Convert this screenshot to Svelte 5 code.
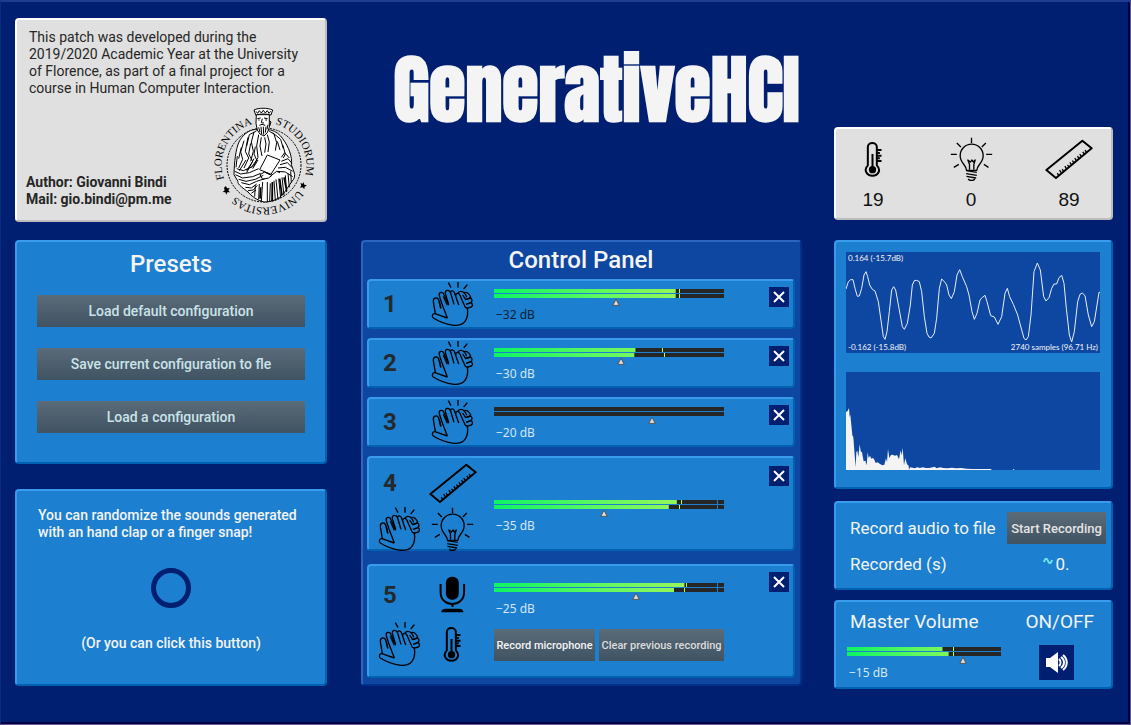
<script>
  const presets = ['Load default configuration', 'Save current configuration to fle', 'Load a configuration'];

  let channels = $state([
    { id: 1, db: -32, dark: true, gain: 53, bars: [[79, 80.5], [79, 80.5]], icons: ['clap'] },
    { id: 2, db: -30, gain: 55.4, bars: [[61.5, 73], [61, 73.7]], icons: ['clap'] },
    { id: 3, db: -20, gain: 69.5, bars: [[0, 0], [0, 0]], icons: ['clap'] },
    { id: 4, db: -35, gain: 47.8, tick: true, bars: [[79.5, 81.3], [76, 80.3]], icons: ['ruler', 'clap', 'bulb'] },
    { id: 5, db: -25, gain: 62, tick: true, bars: [[82.8, 83.4], [78.3, 82.5]], icons: ['mic', 'clap', 'thermo'] }
  ]);
  let master = $state({ id: 'master', db: -15, gain: 76.5, bars: [[62, 68.8], [66, 68.8]] });

  const sensors = [
    { icon: 'thermo', value: 19, label: 'Temperature' },
    { icon: 'bulb', value: 0, label: 'Light' },
    { icon: 'ruler', value: 89, label: 'Distance' }
  ];

  const wave =
    '0,111 7,89 14,83 21,83 27,109 34,133 40,132 47,109 54,69 60,59 65,74 71,99 79,112 87,117 97,149 107,219 112,254 117,262 123,239 130,179 137,114 143,104 149,114 159,169 169,224 175,232 184,214 193,159 199,99 205,86 212,85 220,89 227,119 235,194 243,244 249,255 255,258 265,244 272,199 280,109 287,81 297,91 302,99 309,129 316,140 325,119 333,69 341,53 349,74 362,104 369,129 378,179 385,202 393,184 402,144 409,136 417,130 423,149 434,191 445,195 456,217 467,194 477,124 484,109 491,134 502,157 515,189 523,219 534,259 540,264 547,254 555,189 564,59 574,33 583,54 593,134 600,147 609,137 617,109 624,96 632,96 639,77 647,70 654,94 661,169 670,249 677,270 685,239 695,149 702,127 709,123 717,131 727,189 737,224 745,209 753,159 759,121 762,121';
  const spectrum =
    '0,294 0,120 5,117 9,108 11,135 13,128 16,160 19,190 22,196 25,236 29,286 31,240 34,236 37,255 41,217 44,238 48,241 53,268 58,266 62,280 65,241 68,258 72,251 76,260 80,258 84,261 89,273 95,271 102,276 109,280 115,278 120,259 123,270 126,231 130,258 135,249 140,248 147,251 153,249 159,262 164,235 167,250 170,227 174,280 178,259 183,277 188,281 189,294 192,286 200,287 206,289 214,286 222,288 230,286 240,288 250,288 266,284 272,289 282,286 292,288 304,289 318,287 330,289 345,288 362,290 380,291 436,291 436,294 500,294 502,291 506,294';
</script>

{#snippet glyph(name)}
  {#if name === 'clap'}
    <svg class="glyph clap" viewBox="225 138 129 138" aria-hidden="true">
      <path d="M277 143l8 15M306 141v17M334 149l-11 13" />
      <path d="M274 249l-37-13c-7-1-11 8-5 13 20 13 38 19 62 22 16 1 25-2 33-12 9-11 9-27 7-41" />
      <path d="M238 236l-6-36c-1-14 14-16 17-2l5 22" />
      <path d="M274 249l-16-42-8-24c-3-12 11-15 14-4l14 32" />
      <path d="M278 208l-10-32c-2-12 12-13 16-2l10 34" />
      <path d="M283 172c2-7 11-5 13 3l12 35" />
      <path d="M299 183c0-9 9-11 13-2l7 16 9 20 7 2" />
      <path d="M305 176c4-9 14-8 20-2 3 4 6 7 7 13M324 173c9-3 16 5 20 13-3 5-6 6-14 7" />
      <path d="M320 180l9 14 15-5c5 4 5 9 1 13l-15 6M331 208l15-5c5 6 4 10 0 13l-14 4M250 200l5 20M262 184l12 27" />
    </svg>
  {:else if name === 'bulb'}
    <svg class="glyph bulb" viewBox="368 48 128 132" aria-hidden="true">
      <path d="M432 50v16M388 66l12 12M475 66l-12 12M370 100h18M476 100h18M379 139l15-9M483 139l-14-9" />
      <path d="M417 148c0-16-19-22-19-44a34 34 0 0 1 69 0c0 22-19 28-19 44z" />
      <path d="M426 146v-16l-5-13 8 6 4-6 5 6 5-6-4 14v15" />
      <path d="M416 149l32 5M416 158l32 5M417 166l29 5M422 174c5 6 15 6 20 0" />
    </svg>
  {:else if name === 'ruler'}
    <svg class="glyph ruler" viewBox="660 62 145 121" aria-hidden="true">
      <path class="bold" d="M664 156L773 67l28 23-108 90z" />
      <path d="M697 165l4 6M704 156l5 8M712 153l5 8M720 144l6 10M728 140l5 7M735 133l6 8M743 127l4 7M750 120l6 9M758 114l5 7M765 108l6 9M774 101l5 7M781 96l4 6" />
    </svg>
  {:else if name === 'thermo'}
    <svg class="glyph thermo" viewBox="118 62 56 108" aria-hidden="true">
      <path class="bold" d="M129 135V80c0-16 27-16 27 0v55c14 14 4 31-13 31s-28-17-14-31z" />
      <path class="bold" d="M157 89h13M157 98h8M157 106h13M157 114h8M157 122h13" />
      <path class="bold" d="M143 101v40" />
      <circle class="solid" cx="143" cy="148" r="11" />
    </svg>
  {:else if name === 'mic'}
    <svg class="glyph mic" viewBox="250 385 80 112" aria-hidden="true">
      <rect class="solid" x="270" y="387" width="39" height="70" rx="18" />
      <path class="bold" d="M254 409v25c0 48 71 48 71 0v-25M290 471v8" />
      <path class="solid" d="M256 495c0-8 6-11 14-11h39c8 0 14 3 14 11z" />
    </svg>
  {/if}
{/snippet}

{#snippet meter(ch)}
  <div class="meter">
    <div class="bars">
      {#each ch.bars as [level, peak]}
        <div class="bar">
          <div class="level" style="clip-path: inset(0 {100 - level}% 0 0)"></div>
          {#if peak > 0}<i class="peak" style="left: {peak}%"></i>{/if}
          {#if ch.tick}<i class="tick"></i>{/if}
        </div>
      {/each}
    </div>
    <input type="range" min="0" max="100" step="0.1" aria-label="Gain {ch.id}" bind:value={ch.gain} />
    <span class="db" class:dark={ch.dark}>−{Math.abs(ch.db)} dB</span>
  </div>
{/snippet}

<main>
  <div class="column left">
    <section class="card grey about">
      <p>This patch was developed during the 2019/2020 Academic Year at the University of Florence, as part of a final project for a course in Human Computer Interaction.</p>
      <div class="credits">
        <strong>Author: Giovanni Bindi<br />Mail: gio.bindi@pm.me</strong>
        <svg class="seal" viewBox="0 0 102 108" role="img" aria-label="Florentina Studiorum Universitas">
          <defs>
            <path id="ring" d="M10 71A42 42 0 0 1 90 43A42 42 0 0 1 10 71" />
          </defs>
          <circle class="dots" cx="50" cy="57" r="37" />
          <text><textPath href="#ring">FLORENTINA<tspan dx="23">STUDIORUM</tspan><tspan dx="16">UNIVERSITAS</tspan></textPath></text>
          <g transform="translate(-10 -8) scale(.3333)">
            <path class="ink" d="M298 246l3 8 8 2-7 4-1 8-5-6-8 1 4-7-3-7 7 2zM66 258l3 7 8-1-4 7 5 6-8 0-3 7-3-7-8-1 6-5-2-8z" />
            <path class="robe" d="M155 88c-22 2-40 18-50 38-10 22-14 60-15 98l12 20c-4 8 20 24 30 32 10 12 28 26 48 30 22 0 44-8 58-24l26-38c8-8 10-18 6-28l-8-22c4-22-8-54-26-78-8-12-20-22-36-26z" />
            <path class="robe" d="M157 44l-1 26 4 20 8 12 12 6 10-10 6-16V44z" />
            <path class="robe" d="M150 30c14-7 40-7 56 0l-5 15c-14-4-30-4-46 0z" />
            <path d="M156 34l5 6 5-8 6 7 6-8 6 8 6-7 5 8 5-6M160 56l10-2M180 54l11 2M175 56l-3 12 8 1M163 60h4M184 60h5M166 76l8-3 10 3M164 82l4 14M171 80l2 22M178 80l1 24M186 80l-2 18M192 74l-3 14M196 62l5 4-4 12" />
            <path d="M158 92l-22 12-8 34M150 96l-8 30 6 28-8 30M164 104l-6 34 4 34-14 28M172 112l-4 26 6 30M196 94l14 8 8 26-4 24M206 98l24 20 8 28M190 104l6 22-4 30M182 112l4 20-4 26M220 124l8 26M236 134l8 28-6 12" />
            <path d="M120 122l-10 34 6 22-12 26M132 112l-8 42 10 20-14 30M140 130l-6 32 12 22-18 28M112 142l-8 34M154 140l-4 22 8 18-16 22M100 168l-4 34M126 180l-20 32M150 176l-22 42M162 180l-16 26" />
            <path d="M92 214l18 8 26-4 28-12M94 224l22 10 30-4 24-10M104 238l22 6 28-6 24-12M112 248l24 6 22-10 24-8M124 262l18 2 16-12M132 272l16-2 12-14M98 206l20 6 28-12M142 280l14-10" />
            <path class="robe" d="M190 165l38 15-27 43-34-14z" />
            <path d="M168 224l14-8 22 10-10 8-18 4zM200 228l18-14 10 4M182 216l16 8" />
            <path d="M166 252l-2 46M176 246l-4 58M190 246v60M199 250l-2 54M210 242l4 60M216 238l6 60M224 236l6 58M234 232l6 54M244 226l4 50M252 220l4 42M260 214l2 34M232 184l20-8 12 14M228 194l22-6 14 14M222 204l22-2 22 12M220 214l24 2 22 14M154 256l-2 34M232 172l10-14 14 16M206 246v56" />
            <path d="M205 246l-1 58M240 232l8 40M170 262l-2 34M227 236l7 50" class="heavy" />
          </g>
        </svg>
      </div>
    </section>

    <section class="card presets">
      <h2>Presets</h2>
      {#each presets as preset}
        <button class="action">{preset}</button>
      {/each}
    </section>

    <section class="card randomize">
      <p>You can randomize the sounds generated with an hand clap or a finger snap!</p>
      <button class="bang" aria-label="Randomize"></button>
      <p class="hint">(Or you can click this button)</p>
    </section>
  </div>

  <div class="column middle">
    <header><h1>GenerativeHCI</h1></header>
    <section class="card panel">
      <h2>Control Panel</h2>
      {#each channels as ch}
        <article class="card channel" class:tall={ch.icons.length > 1} class:last={ch.id === 5}>
          <div class="icons">
            <b>{ch.id}</b>
            {#each ch.icons as name}
              <span class="slot">{@render glyph(name)}</span>
            {/each}
          </div>
          <div class="control">
            {@render meter(ch)}
            {#if ch.id === 5}
              <div class="mic-actions">
                <button class="action bright">Record microphone</button>
                <button class="action pale">Clear previous recording</button>
              </div>
            {/if}
          </div>
          <button class="close" aria-label="Clear channel {ch.id}">
            <svg viewBox="0 0 20 20" aria-hidden="true"><path d="M5 5l10 10M15 5L5 15" /></svg>
          </button>
        </article>
      {/each}
    </section>
  </div>

  <div class="column right">
    <section class="card grey sensors">
      {#each sensors as s}
        <div class="sensor" title={s.label}>
          <span class="slot">{@render glyph(s.icon)}</span>
          <output>{s.value}</output>
        </div>
      {/each}
    </section>

    <section class="card scopes">
      <div class="scope">
        <svg viewBox="0 0 762 303" preserveAspectRatio="none" aria-hidden="true"><polyline points={wave} /></svg>
        <span>0.164 (-15.7dB)</span>
        <div><span>-0.162 (-15.8dB)</span><span>2740 samples (96.71 Hz)</span></div>
      </div>
      <div class="scope">
        <svg viewBox="0 0 762 294" preserveAspectRatio="none" aria-hidden="true"><polygon points={spectrum} /></svg>
      </div>
    </section>

    <section class="card record">
      <span>Record audio to file</span>
      <button class="action start">Start Recording</button>
      <span>Recorded (s)</span>
      <output><svg viewBox="0 0 10 8" aria-hidden="true"><path d="M1 5C2 1 4 1 5 4S8 7 9 3" /></svg>0.</output>
    </section>

    <section class="card volume">
      <h3>Master Volume</h3>
      <h3 class="state">ON/OFF</h3>
      {@render meter(master)}
      <button class="speaker" aria-label="Toggle audio">
        <svg viewBox="0 0 35 35" aria-hidden="true">
          <path class="cone" d="M7 13h4l8-6v21l-8-6H7z" />
          <path d="M20 14c2 2 2 5 0 7M22 12c4 3 4 8 0 11M24 10c5 4 5 11 0 15" />
        </svg>
      </button>
    </section>
  </div>
</main>

<style>
  :global(body) { margin: 0; background: #001f70; }
  * { box-sizing: border-box; }
  main {
    min-height: 100vh;
    display: grid;
    grid-template-columns: minmax(0, 312fr) minmax(0, 443fr) minmax(0, 279fr);
    column-gap: 32px;
    padding: 16px 17px 32px 14px;
    border: 1px solid #0b2b7d;
    border-top: 2px solid #1f3c90;
    border-right-color: #66568f;
    border-bottom-color: #66568f;
    box-shadow: inset -2px -2px #000044;
    background: #001f70;
    color: #f4f4f4;
    font-family: Roboto, "Liberation Sans", sans-serif;
    font-size: 14px;
    line-height: 17px;
  }
  h1, h2, h3, p { margin: 0; }
  button { font: inherit; color: inherit; border: 0; padding: 0; cursor: pointer; }
  .column { display: flex; flex-direction: column; }

  .card {
    background: #1c7fcf;
    border: 2px solid;
    border-color: #3a9aec #0062b0 #0062b0 #3a9aec;
    border-radius: 4px;
  }
  .grey { background: #e0e0e0; border-color: #fff #bdbdbd #bdbdbd #fff; color: #262626; }

  h2 { font-size: 24px; line-height: 28px; font-weight: 500; text-align: center; }
  h3 { font-size: 19px; line-height: 24px; font-weight: 400; }

  .action {
    flex-shrink: 0;
    height: 32px;
    background: linear-gradient(#5a6b79, #405362);
    color: #c9e3e8;
    font-weight: 500;
  }

  .about { height: 204px; padding: 9px 9px 4px 12px; display: flex; flex-direction: column; justify-content: space-between; }
  .about p { padding-right: 12px; }
  .credits { display: flex; justify-content: space-between; align-items: flex-end; margin-left: -3px; }
  .credits strong { padding-bottom: 8px; font-weight: 700; }
  .seal { width: 102px; height: 108px; overflow: visible; margin-top: -16px; }
  .seal text { font: 11px "Liberation Serif", serif; fill: #000; }
  .seal g { fill: none; stroke: #000; stroke-width: 3; }
  .seal .robe { fill: #fff; }
  .seal .ink { fill: #000; stroke: none; }
  .seal .heavy { stroke-width: 5; }
  .dots { fill: none; stroke: #000; stroke-dasharray: 2 1; }

  .presets { height: 224px; margin-top: 18px; padding: 8px 20px 28px; display: flex; flex-direction: column; }
  .presets h2 { margin-bottom: 17px; }
  .presets .action { margin-bottom: 21px; }

  .randomize { height: 197px; margin-top: 25px; padding: 16px 21px; display: flex; flex-direction: column; align-items: center; font-weight: 500; }
  .bang { width: 40px; height: 40px; margin: 27px 0; border: 5px solid #001f70; border-radius: 50%; background: none; }

  .middle { padding-left: 2px; }
  header { height: 222px; padding: 28px 0 0 30px; text-align: center; }
  h1 {
    font-family: Impact, Anton, "Roboto Condensed", "Open Sans Condensed", "Liberation Sans Narrow", Roboto, sans-serif;
    font-size: 74px;
    line-height: 88px;
    font-weight: 900;
  }
  .panel {
    padding: 4px 5px 6px 4px;
    background: #0e47a1;
    border-color: #2c64bf #00308a #00308a #2c64bf;
  }
  .panel > h2 { margin-bottom: 5px; }
  .channel {
    display: grid;
    grid-template-columns: 106px minmax(0, 1fr) 20px;
    height: 50px;
    margin-bottom: 9px;
    padding: 0 4px;
  }
  .icons { display: grid; grid-template-columns: 53px 53px; grid-auto-rows: 1fr; align-items: center; }
  .icons b { padding-left: 10px; font-size: 24px; line-height: 28px; font-weight: 700; color: #24292e; }
  .slot { display: grid; place-items: center; }
  .control { padding: 8px 45px 0 15px; }
  .close { width: 20px; height: 20px; margin-top: 6px; background: #001f70; }
  .close svg { display: block; }
  .close path { fill: none; stroke: #fff; stroke-width: 2; }
  .tall { height: 95px; margin-bottom: 13px; }
  .tall .icons { padding-top: 2px; }
  .tall .control { padding-top: 42px; }
  .tall .close { margin-top: 8px; }
  .last { height: 114px; margin-bottom: 0; }
  .last .icons { padding: 4px 0 8px; }
  .last .control { padding-top: 17px; }
  .last .close { margin-top: 6px; }
  .mic-actions { display: flex; gap: 4px; margin-top: 12px; }
  .mic-actions .action { flex: 1 0 auto; font-size: 11px; }
  .bright { color: #f4f4f4; }
  .pale { color: #dcdcdc; }

  .glyph { fill: none; stroke: #000; stroke-width: 4; stroke-linejoin: round; }
  .bold { stroke-width: 6; }
  .solid { fill: #000; stroke: none; }
  .clap { width: 43px; height: 46px; }
  .bulb { width: 43px; height: 44px; }
  .ruler { width: 48px; height: 40px; }
  .thermo { width: 19px; height: 36px; }
  .mic { width: 27px; height: 37px; }

  .meter { display: flex; flex-direction: column; }
  .bars { display: grid; gap: 1px; }
  .bar { position: relative; height: 4px; background: #262626; }
  .level { height: 4px; background: linear-gradient(90deg, #0cf562, #5df95f 45%, #b4f557); }
  .peak, .tick { position: absolute; top: 0; width: 1px; height: 4px; background: #b0ff60; }
  .tick { left: 97%; background: #1c7fcf; }
  input {
    appearance: none;
    width: 100%;
    height: 8px;
    margin: 0;
    background: none;
  }
  input::-webkit-slider-thumb {
    appearance: none;
    width: 8px;
    height: 8px;
    background: url("data:image/svg+xml,%3Csvg xmlns='http://www.w3.org/2000/svg' viewBox='0 0 8 8'%3E%3Cpath d='M4 1.2L7.2 7.4H.8z' fill='%23ddd' stroke='%23555'/%3E%3C/svg%3E");
  }
  .db { padding-left: 2px; font: 12px/17px "Noto Sans", sans-serif; color: #d5e6f3; }
  .db.dark { color: #0c2238; }

  .right { padding-top: 109px; }
  .sensors { display: flex; justify-content: space-between; height: 93px; padding: 0 17px 0 12px; }
  .sensor { display: grid; width: 50px; grid-template-rows: 59px 1fr; text-align: center; font: 19px/24px "Liberation Sans", sans-serif; color: #111; }
  .scopes { height: 249px; margin-top: 20px; padding: 10px 11px 17px 10px; display: grid; grid-template-rows: 101px 98px; gap: 19px; }
  .scope { position: relative; display: flex; flex-direction: column; justify-content: space-between; padding: 0 2px; background: #0e47a1; font: 8px/12px Lato, sans-serif; }
  .scope svg { position: absolute; inset: 0; width: 100%; height: 100%; }
  .scope div { display: flex; justify-content: space-between; }
  polyline { fill: none; stroke: #e8eef8; stroke-width: 3; }
  polygon { fill: #f4f4f4; }

  .record { display: grid; grid-template-columns: 1fr 99px; grid-template-rows: 32px 40px; height: 89px; margin-top: 12px; padding: 9px 5px 0 14px; align-items: center; font-size: 17px; }
  .start { font-size: 13px; color: #e4e4e4; }
  .record output { justify-self: center; }
  .record output svg { width: 10px; height: 8px; margin-right: 2px; vertical-align: 5px; }
  .record output path { fill: none; stroke: #6fe9f2; stroke-width: 2; }
  .volume { display: grid; grid-template-columns: 154px 1fr; grid-template-rows: 24px auto; row-gap: 11px; height: 89px; margin-top: 10px; padding: 8px 17px 0 11px; }
  .volume h3 { padding-left: 3px; white-space: nowrap; }
  .volume .state { text-align: right; }
  .volume .meter { padding-top: 2px; }
  .speaker { width: 35px; height: 35px; margin-left: 38px; background: #001f70; }
  .speaker svg { display: block; }
  .speaker path { fill: none; stroke: #fff; stroke-width: 2; }
  .speaker .cone { fill: #fff; stroke: none; }
</style>
